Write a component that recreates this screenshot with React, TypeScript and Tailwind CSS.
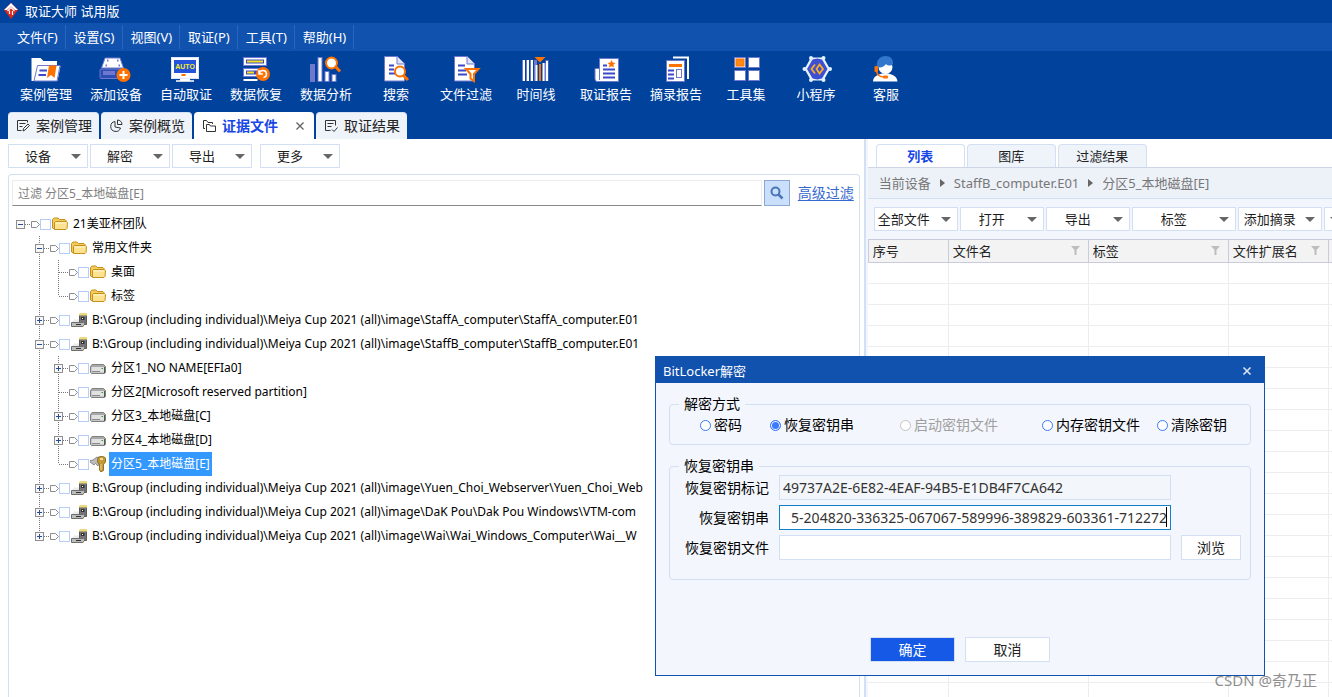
import type { ReactNode } from "react";

const P = "#6f78cf";
const O = "#ff7200";
const B = "#3b49c8";

function Tool({ label, children }: { label: string; children: ReactNode }) {
  return (
    <button type="button" className="flex w-[70px] shrink-0 flex-col items-center gap-[2px] text-white">
      <svg width="30" height="28" viewBox="0 0 30 28" className="overflow-visible" aria-hidden="true">
        {children}
      </svg>
      <span className="text-[13px] leading-4 whitespace-nowrap">{label}</span>
    </button>
  );
}

const page = (
  <>
    <path d="M3.500 .5h13l7 7v17.500h-20z" fill="#fff" stroke={P} />
    <path d="M16 1v7h7" fill="#dfe3fa" stroke={P} />
  </>
);

function Toolbar() {
  return (
    <nav aria-label="工具栏" className="flex h-[61px] overflow-hidden pt-[5px] pl-[11px]">
      <Tool label="案例管理">
        <path d="M.5 2h9l3 3H26v5h3.500l-3 15H.5z" fill="#fff" />
        <path d="M3 25 6.500 9.500H29L26 25z" fill="#fff" stroke={P} />
        <path d="M8.500 14.500H16M7.500 19H15" stroke={B} strokeWidth="2" />
        <path d="M18 9.500h7.500L23.500 22l-3.500-3-4 3z" fill={O} />
      </Tool>
      <Tool label="添加设备">
        <path d="M4 2h15l3.500 10H.5z" fill="#fff" stroke={P} />
        <path d="M6 4.500h1.500M16 4.500h1.500M4.500 9.500H6M17.500 9.500H19" stroke={P} strokeWidth="2" />
        <rect x="-1" y="13" width="24" height="9.500" rx="1" fill="#2c4fb4" stroke={P} />
        <rect x="2" y="15" width="12" height="4" fill={P} />
        <circle cx="22.500" cy="19" r="7" fill={O} />
        <path d="M18.500 19h8M22.500 15v8" stroke="#fff" strokeWidth="2" />
      </Tool>
      <Tool label="自动取证">
        <rect x=".5" y="1.500" width="27" height="21" fill="#fff" stroke="#dfe6fa" />
        <rect x="3" y="4" width="22" height="13" fill="#2453dc" />
        <text x="14" y="13" textAnchor="middle" fontSize="7" fontWeight="700" fill="#f6ee1c" fontFamily="Liberation Sans, sans-serif">AUTO</text>
        <rect x="10.500" y="18" width="4" height="2" fill={O} />
        <path d="M9 23.500h10M5 25h18" stroke="#fff" strokeWidth="1.500" />
      </Tool>
      <Tool label="数据恢复">
        <rect x="2.500" y="1.500" width="23" height="8" fill="#fff" stroke={P} />
        <path d="M5 5.500h18" stroke={B} strokeWidth="4" />
        <path d="M6 5.500h16" stroke="#f3e21d" strokeWidth="2" />
        <rect x="2.500" y="12.500" width="15" height="8" fill="#fff" stroke={P} />
        <path d="M5 16.500h11" stroke={B} strokeWidth="4" />
        <path d="M6 16.500h7" stroke="#f3e21d" strokeWidth="2" />
        <path d="M2.500 24h14" stroke="#fff" strokeWidth="2" />
        <circle cx="22" cy="18" r="7" fill={O} />
        <path d="M18.500 17.500a3.500 3.500 0 1 1 4 4M18 14v4h4" fill="none" stroke="#fff" strokeWidth="1.500" />
      </Tool>
      <Tool label="数据分析">
        <rect x="-.5" y="8.500" width="4" height="17" fill={P} stroke={P} />
        <rect x="7" y="1.500" width="4" height="24" fill="#fff" stroke={P} />
        <rect x="14" y="15.500" width="4" height="10" fill="#fff" stroke={P} />
        <rect x="21" y="18.500" width="4" height="7" fill="#fff" stroke={P} />
        <path d="m24.500 10.500 4.500 5" stroke={O} strokeWidth="3" />
        <circle cx="20.500" cy="7" r="5.500" fill="#fff" stroke={O} strokeWidth="2" />
      </Tool>
      <Tool label="搜索">
        {page}
        <path d="M8 9.500h5M8 13.500h5M8 17.500h6" stroke={B} strokeWidth="2" />
        <path d="m22 19 5 5" stroke={O} strokeWidth="3" />
        <circle cx="19" cy="15.500" r="5" fill="#fff" stroke={O} strokeWidth="2" />
      </Tool>
      <Tool label="文件过滤">
        {page}
        <path d="M7 9.500h7M7 14.500h8M7 18.500h9" stroke={B} strokeWidth="2" />
        <path d="M15 13h12.500l-4.500 5v7l-3.500-2.500V18z" fill="#fff" stroke={O} strokeWidth="2" />
      </Tool>
      <Tool label="时间线">
        <path d="M2.500 4v21M6.500 4v21M10.500 4v21M14.500 4v21M23.500 7v18M26 4v21" stroke={P} strokeWidth="3" />
        <path d="M3 4v21M7 4v21M11 4v21M15.500 9v16M22.500 7v18M26 5v20" stroke="#fff" strokeWidth="2" />
        <path d="M13.500 1h11l-5.500 5.500z" fill={O} />
        <path d="M19 8v17" stroke={O} strokeWidth="2" />
      </Tool>
      <Tool label="取证报告">
        <path d="M8.500 2.500h19v23h-21a2.500 2.500 0 0 1-2.500-2.500V12.500h4.500z" fill="#fff" stroke={P} />
        <path d="M8.500 12v12" stroke={P} />
        <path d="m20.500 4 1.200 2.600 2.800.3-2.100 1.900.6 2.800-2.500-1.400-2.500 1.400.6-2.800-2.100-1.900 2.800-.3z" fill={O} />
        <path d="M12 9.500h4M12 13.500h12M12 17.500h12M12 21.500h12" stroke={B} strokeWidth="2" />
      </Tool>
      <Tool label="摘录报告">
        <path d="M12 1.500h15V23" fill="none" stroke="#fff" strokeWidth="2" />
        <rect x="5.500" y="4.500" width="18" height="21" fill="#fff" stroke={P} />
        <path d="M8 9.500h13" stroke={O} strokeWidth="3" />
        <path d="M7 14.500h6M7 18.500h6M7 22.500h6" stroke={B} strokeWidth="2" />
        <rect x="15.500" y="13.500" width="5" height="8" fill="#fff" stroke={P} />
      </Tool>
      <Tool label="工具集">
        <path d="M3.500 1.500h11v10h-11zM17.500 1.500h11v10h-11zM3.500 14.500h11v10h-11zM17.500 14.500h11v10h-11z" fill="#fff" stroke={P} />
        <rect x="5" y="3" width="8" height="7" fill="#ff8a12" stroke={O} />
      </Tool>
      <Tool label="小程序">
        <path d="M10 1.500h12.500L29 13l-6.500 11.500H10L3.500 13z" fill="#e8f4ff" />
        <path d="m11.500 3.500 4.800-1 4.800 1L26.500 13 21 22.500l-4.700 1-4.800-1L6 13z" fill="#3d4fd2" />
        {[[10, 2], [22.5, 2], [29, 13], [22.5, 24], [10, 24], [3.5, 13]].map(([x, y]) => (
          <circle key={`${x}-${y}`} cx={x} cy={y} r="2" fill="#dff4ff" />
        ))}
        <path d="m14 8.500-3.500 4.500 3.500 4.500M18.500 8.500l3.500 4.500-3.500 4.500-3-4.500z" fill="none" stroke="#ffad1f" strokeWidth="1.800" />
      </Tool>
      <Tool label="客服">
        <path d="M2 25.500c0-5 5-7 9-8h6c5 1 9 3 9.500 8z" fill="#fff" />
        <circle cx="14.500" cy="11" r="7" fill="#fff" />
        <path d="M6 11C5 4 9 0 14.500 0c5 0 8 3.500 7.500 8-2 2-5 2-7 0-2 3-5 4-9 3z" fill="#3177cb" />
        <rect x="3.500" y="10" width="3.500" height="6" rx="1" fill={O} />
        <path d="M5.500 15c.5 4 4 6 8 6" fill="none" stroke={O} strokeWidth="1.500" />
        <rect x="12" y="19.500" width="5" height="3" rx="1" fill={O} />
      </Tool>
    </nav>
  );
}

const tabBase = "flex h-[27px] items-center gap-[6px] rounded-t border-t border-[#d5e1f4] bg-[#eff3fa] pr-[7px] pl-2 text-sm leading-5 whitespace-nowrap text-[#222]";

function MainTabs() {
  return (
    <div role="tablist" className="flex gap-[2px] pl-2">
      <button type="button" role="tab" className={tabBase}>
        <svg width="14" height="14" viewBox="0 0 14 14" fill="none" stroke="#333" aria-hidden="true">
          <path d="M11.500 3.500v-2h-10v10h4M3.500 4.500h6M3.500 7.500h3M7 12l.5-2.500 4.500-4.500 1.500 1.500L9 11z" />
        </svg>
        案例管理
      </button>
      <button type="button" role="tab" className={tabBase}>
        <svg width="14" height="14" viewBox="0 0 14 14" fill="none" stroke="#333" aria-hidden="true">
          <path d="M6 2.500a5 5 0 1 0 5.500 6.500L6 8zM8.500 1v4.500H13A4.500 4.500 0 0 0 8.500 1z" />
        </svg>
        案例概览
      </button>
      <div className="flex h-[27px] items-center rounded-t bg-white pr-[9px]">
        <button type="button" role="tab" aria-selected="true" className="flex items-center gap-[6px] pl-2 text-sm leading-5 font-bold whitespace-nowrap text-[#1747e6]">
          <svg width="14" height="14" viewBox="0 0 14 14" fill="none" stroke="#333" aria-hidden="true">
            <path d="M3 9.500H1.500v-8h3l1.500 2h4.500v1.500M4.500 12.500v-7h3l1 1.500h5v5.500z" />
          </svg>
          证据文件
        </button>
        <button type="button" aria-label="关闭" className="ml-[17px]">
          <svg width="10" height="10" viewBox="0 0 10 10" stroke="#666" strokeWidth="1.400" aria-hidden="true">
            <path d="m1.500 1.500 7 7M8.500 1.500l-7 7" />
          </svg>
        </button>
      </div>
      <button type="button" role="tab" className={tabBase}>
        <svg width="14" height="14" viewBox="0 0 14 14" fill="none" stroke="#333" aria-hidden="true">
          <path d="M11.500 6.500v-5h-10v10h5M3.500 4.500h6M3.500 7.500h4M8 10.500l2 2 3.500-4" />
        </svg>
        取证结果
      </button>
    </div>
  );
}

function Caret() {
  return (
    <svg width="10" height="5" viewBox="0 0 10 5" className="pointer-events-none shrink-0" aria-hidden="true">
      <path d="M0 0h10L5 5z" fill="#666" />
    </svg>
  );
}

function Drop({ label, className }: { label: string; className: string }) {
  return (
    <button type="button" aria-haspopup="menu" className={`flex shrink-0 items-center justify-between border border-[#d3dff2] bg-white pr-[6px] text-[13px] leading-4 whitespace-nowrap text-[#1d1d1d] ${className}`}>
      {label}
      <Caret />
    </button>
  );
}

type Kind = "folder" | "image" | "disk" | "key";
type Row = { level: number; kind: Kind; label: string; box?: "+" | "-"; last?: boolean; selected?: boolean };

const rows: Row[] = [
  { level: 0, kind: "folder", label: "21美亚杯团队", box: "-" },
  { level: 1, kind: "folder", label: "常用文件夹", box: "-" },
  { level: 2, kind: "folder", label: "桌面" },
  { level: 2, kind: "folder", label: "标签", last: true },
  { level: 1, kind: "image", label: "B:\\Group (including individual)\\Meiya Cup 2021 (all)\\image\\StaffA_computer\\StaffA_computer.E01", box: "+" },
  { level: 1, kind: "image", label: "B:\\Group (including individual)\\Meiya Cup 2021 (all)\\image\\StaffB_computer\\StaffB_computer.E01", box: "-" },
  { level: 2, kind: "disk", label: "分区1_NO NAME[EFIa0]", box: "+" },
  { level: 2, kind: "disk", label: "分区2[Microsoft reserved partition]" },
  { level: 2, kind: "disk", label: "分区3_本地磁盘[C]", box: "+" },
  { level: 2, kind: "disk", label: "分区4_本地磁盘[D]", box: "+" },
  { level: 2, kind: "key", label: "分区5_本地磁盘[E]", last: true, selected: true },
  { level: 1, kind: "image", label: "B:\\Group (including individual)\\Meiya Cup 2021 (all)\\image\\Yuen_Choi_Webserver\\Yuen_Choi_Web", box: "+" },
  { level: 1, kind: "image", label: "B:\\Group (including individual)\\Meiya Cup 2021 (all)\\image\\DaK Pou\\Dak Pou Windows\\VTM-com", box: "+" },
  { level: 1, kind: "image", label: "B:\\Group (including individual)\\Meiya Cup 2021 (all)\\image\\Wai\\Wai_Windows_Computer\\Wai__W", box: "+", last: true },
];

function Branch({ level, box, last }: Row) {
  return (
    <svg width="24" height="24" viewBox="0 0 24 24" fill="none" className="shrink-0" shapeRendering="crispEdges" aria-hidden="true">
      {level > 0 && <path d={last ? "M4.500 0v12" : "M4.500 0v24"} stroke="#777" strokeDasharray="1 1" />}
      <path d="M5 12.500h10" stroke="#777" strokeDasharray="1 1" />
      {box && (
        <>
          <rect x=".5" y="8.500" width="8" height="8" fill="#f7f7f7" stroke="#8e8e8e" />
          <path d={box === "+" ? "M2 12.500h5M4.500 10v5" : "M2 12.500h5"} stroke="#2b4b9b" />
        </>
      )}
      <path d="M15.500 9.500h5l3 3-3 3h-5z" fill="#fff" stroke="#8a8a8a" shapeRendering="auto" />
    </svg>
  );
}

function NodeIcon({ kind }: { kind: Kind }) {
  return (
    <svg width="16" height="16" viewBox="0 0 16 16" className="shrink-0" aria-hidden="true">
      {kind === "folder" && (
        <>
          <path d="M.5 12V3.500l1.500-1.500h4l1.500 1.500h5.500l1 1V12.500H1z" fill="#f3cb5c" stroke="#c4901c" />
          <path d="M2.500 13.500V6.500l1-1h11l1 1-.5 6-1 1z" fill="#fde391" stroke="#c4901c" />
          <path d="M4 7h10" stroke="#fff6cf" />
        </>
      )}
      {kind === "image" && (
        <>
          <path d="M8.500 3h7v9.500h-7z" fill="#757575" stroke="#5a5a5a" />
          <path d="M8.500 1h7.500v2.500H8z" fill="#e9dc7a" />
          <path d="M10 5h3.500v3H10z" fill="#333" />
          <path d="M11 6h1v1h-1z" fill="#fff" />
          <path d="m1 10.500 1.500-3H8v3z" fill="#ececec" />
          <path d="M.5 10.500H12l1.500-1v3l-1.500 2H.5z" fill="#bdbdbd" stroke="#6d6d6d" />
          <path d="M5 12.500h5" stroke="#333" />
        </>
      )}
      {kind === "disk" && (
        <>
          <path d="M.5 6.500 2 4.500h11.500l2 2v6l-1 1h-13l-1-1z" fill="#a9a9a9" stroke="#808080" />
          <path d="M1.500 7h12.500v5.500H1.500z" fill="#e2e2e2" />
          <path d="M14.500 7v6" stroke="#555" />
          <path d="M2.500 11.500h8" stroke="#333" strokeDasharray="1 1" />
          <path d="M11.500 8.500h1.500" stroke="#2b9a3a" />
        </>
      )}
      {kind === "key" && (
        <>
          <path d="M0 6V4.500L3 4l4-3 4 2-3 7-2.500-2.500L4 9z" fill="#bcbcbc" stroke="#777" strokeWidth=".8" />
          <path d="M8 1.500c1.500-1.500 6-1.500 7.500.5v4L13.500 8.500v6L11 16l-1.500-2V8.500L7.500 6z" fill="#c39a35" stroke="#7c5c13" strokeWidth=".8" />
          <path d="M10 3h3" stroke="#fff3b5" strokeWidth="1.500" />
          <path d="M11 8v6" stroke="#f0d67c" />
        </>
      )}
    </svg>
  );
}

function TreeRow(row: Row) {
  const id = `node-${rows.findIndex((r) => r.label === row.label)}`;
  return (
    <li className="flex h-6 items-center">
      {row.level > 0 && (
        <span className="w-[19px] shrink-0" />
      )}
      {row.level > 1 && (
        <svg width="19" height="24" viewBox="0 0 19 24" className="shrink-0" shapeRendering="crispEdges" aria-hidden="true">
          <path d="M4.500 0v24" stroke="#777" strokeDasharray="1 1" />
        </svg>
      )}
      <Branch {...row} />
      <input id={id} type="checkbox" className="size-[11px] shrink-0 appearance-none border border-[#b5cdfb] bg-white checked:bg-[#3b79ff]" />
      <span className="w-px shrink-0" />
      <NodeIcon kind={row.kind} />
      <label htmlFor={id} className={`ml-[3px] px-[2px] text-xs leading-6 whitespace-nowrap ${row.selected ? "bg-[#3399ff] text-white" : "text-black"}`}>
        {row.label}
      </label>
    </li>
  );
}

function EvidencePanel() {
  return (
    <section className="flex w-[65%] min-w-0 shrink-0 flex-col border-r-2 border-[#d3dff2] pt-[5px] pr-1 pl-2">
      <div className="flex gap-[2px]">
        <Drop label="设备" className="h-6 w-20 pl-4" />
        <Drop label="解密" className="h-6 w-20 pl-4" />
        <Drop label="导出" className="h-6 w-20 pl-4" />
        <Drop label="更多" className="ml-[6px] h-6 w-20 pl-4" />
      </div>
      <div className="mt-[6px] flex min-h-0 flex-1 flex-col rounded-t border border-b-0 border-[#d3dff2]">
        <div className="flex items-center pt-[5px] pr-[5px] pl-[3px]">
          <input
            type="text"
            aria-label="过滤"
            placeholder="过滤 分区5_本地磁盘[E]"
            className="h-[26px] min-w-0 flex-1 border border-[#ececec] border-b-[#888] px-[5px] text-xs text-black outline-none placeholder:text-[#808080]"
          />
          <button type="button" aria-label="搜索" className="ml-[2px] flex size-[26px] items-center justify-center border border-[#8da9d3] bg-[#cadffb]">
            <svg width="14" height="14" viewBox="0 0 14 14" fill="none" stroke="#4a76b8" strokeWidth="2" aria-hidden="true">
              <circle cx="5.500" cy="5.500" r="4" />
              <path d="m8.500 8.500 4 4" strokeWidth="2.500" />
            </svg>
          </button>
          <a href="#advanced" className="ml-2 text-sm whitespace-nowrap text-[#3469cf] underline underline-offset-2">高级过滤</a>
        </div>
        <ul className="mt-[6px] min-h-0 flex-1 overflow-hidden pl-[7px]">
          {rows.map((row) => (
            <TreeRow key={row.label} {...row} />
          ))}
        </ul>
      </div>
    </section>
  );
}

function Filter() {
  return (
    <svg width="9" height="10" viewBox="0 0 9 10" className="shrink-0" aria-hidden="true">
      <path d="M0 0h9L5.500 4v5h-2V4z" fill="#bdbdbd" />
    </svg>
  );
}

const columns = [
  { name: "序号", filter: false },
  { name: "文件名", filter: true },
  { name: "标签", filter: true },
  { name: "文件扩展名", filter: true },
];

const sideTab = "h-[23px] w-[89px] rounded-t border border-b-0 border-[#d3dff2] text-[13px] leading-4";

function FileList() {
  return (
    <section className="flex min-w-0 flex-1 flex-col overflow-hidden bg-[#f3f6fc] pl-[2px]">
      <div role="tablist" className="flex gap-[2px] border-b border-[#cdd5e6] bg-white pt-[5px] pl-2">
        <button type="button" role="tab" aria-selected="true" className={`${sideTab} bg-white font-bold text-[#1747e6]`}>列表</button>
        <button type="button" role="tab" className={`${sideTab} bg-[#eff3fa] text-[#222]`}>图库</button>
        <button type="button" role="tab" className={`${sideTab} bg-[#eff3fa] text-[#222]`}>过滤结果</button>
      </div>
      <div className="flex h-[31px] items-center gap-[9px] border-b border-[#d3dff2] bg-[#edf1f8] pl-[11px] text-[13px] leading-4 whitespace-nowrap text-[#777]">
        <span>当前设备</span>
        <svg width="5" height="8" viewBox="0 0 5 8" aria-hidden="true"><path d="m0 0 5 4-5 4z" fill="#666" /></svg>
        <span>StaffB_computer.E01</span>
        <svg width="5" height="8" viewBox="0 0 5 8" aria-hidden="true"><path d="m0 0 5 4-5 4z" fill="#666" /></svg>
        <span>分区5_本地磁盘[E]</span>
      </div>
      <div className="flex h-10 items-center gap-[2px] pl-[6px]">
        <div className="flex h-6 w-[84px] shrink-0 items-center border border-[#d3dff2] bg-white pr-[6px]">
          <select aria-label="文件范围" className="w-full appearance-none bg-transparent pl-[3px] text-[13px] leading-4 text-[#1d1d1d] outline-none">
            <option>全部文件</option>
          </select>
          <Caret />
        </div>
        <Drop label="打开" className="h-6 w-[84px] pl-[18px]" />
        <Drop label="导出" className="h-6 w-[84px] pl-[18px]" />
        <Drop label="标签" className="h-6 w-[104px] pl-7" />
        <Drop label="添加摘录" className="h-6 w-[84px] pl-[5px]" />
        <Drop label="" className="h-6 w-[84px] pl-[5px]" />
      </div>
      <div className="min-h-0 flex-1 overflow-hidden bg-white">
        <table className="w-[560px] table-fixed border-separate border-spacing-0">
          <colgroup>
            <col className="w-[81px]" />
            <col className="w-[140px]" />
            <col className="w-[140px]" />
            <col className="w-[100px]" />
            <col />
          </colgroup>
          <thead>
            <tr className="h-6 bg-[#f3f3f4]">
              {columns.map((c) => (
                <th key={c.name} className="border-y border-r border-[#c9cadb] p-0 font-normal first:border-l">
                  <div className="flex items-center justify-between pr-2 pl-1 text-[13px] leading-4 whitespace-nowrap text-[#222]">
                    {c.name}
                    {c.filter && <Filter />}
                  </div>
                </th>
              ))}
              <th className="border-y border-[#c9cadb] p-0" />
            </tr>
          </thead>
          <tbody>
            {Array.from({ length: 40 }, (_, i) => (
              <tr key={i} className="h-[21px]">
                <td className="border-r border-b border-[#ededed] p-0" />
                <td className="border-r border-b border-[#ededed] p-0" />
                <td className="border-r border-b border-[#ededed] p-0" />
                <td className="border-r border-b border-[#ededed] p-0" />
                <td className="border-b border-[#ededed] p-0" />
              </tr>
            ))}
          </tbody>
        </table>
      </div>
    </section>
  );
}

const modes = [
  { label: "密码" },
  { label: "恢复密钥串", checked: true },
  { label: "启动密钥文件", disabled: true },
  { label: "内存密钥文件" },
  { label: "清除密钥" },
];

const field = "block h-[25px] w-full border px-[3px] text-sm text-[#333] outline-none";

function DecryptDialog() {
  return (
    <div role="dialog" aria-labelledby="dialog-title" className="absolute top-[356px] left-[655px] w-[610px] border border-[#1152ae] bg-[#f3f6fc] pb-[13px] text-sm text-black">
      <div className="flex h-[26px] items-center justify-between bg-[#1152ae] pt-[2px] pr-3 pl-[7px] text-white">
        <h2 id="dialog-title" className="text-[13px] leading-4">BitLocker解密</h2>
        <button type="button" aria-label="关闭">
          <svg width="10" height="10" viewBox="0 0 10 10" stroke="#dbe4f2" strokeWidth="1.600" aria-hidden="true">
            <path d="m1.500 1.500 7 7M8.500 1.500l-7 7" />
          </svg>
        </button>
      </div>
      <form className="px-[13px] pt-3">
        <fieldset className="rounded border border-[#d3dff2] pt-px pb-2">
          <legend className="ml-[9px] px-[5px] leading-[18px]">解密方式</legend>
          <div className="grid grid-cols-[70px_130px_142px_115px_auto] pl-[30px]">
            {modes.map((m) => (
              <label key={m.label} className={`flex items-center gap-[3px] leading-[22px] whitespace-nowrap ${m.disabled ? "text-[#a0a0a0]" : ""}`}>
                <input
                  type="radio"
                  name="mode"
                  defaultChecked={m.checked}
                  disabled={m.disabled}
                  className="size-[11px] shrink-0 appearance-none rounded-full border border-[#3b79ff] bg-white checked:bg-[#3b79ff] checked:shadow-[inset_0_0_0_1px_#fff] disabled:border-[#c4c4c4]"
                />
                {m.label}
              </label>
            ))}
          </div>
        </fieldset>
        <fieldset className="mt-3 rounded border border-[#d3dff2] pb-[19px]">
          <legend className="ml-[9px] px-[5px] leading-[18px]">恢复密钥串</legend>
          <div className="grid grid-cols-[99px_392px_60px] items-center gap-x-[10px] gap-y-[5px]">
            <label htmlFor="key-id" className="text-right leading-5">恢复密钥标记</label>
            <input id="key-id" readOnly defaultValue="49737A2E-6E82-4EAF-94B5-E1DB4F7CA642" className={`${field} border-[#d3dff2] bg-[#f3f6fa]`} />
            <span />
            <label htmlFor="key" className="text-right leading-5">恢复密钥串</label>
            <div className="relative">
              <input id="key" defaultValue="5-204820-336325-067067-589996-389829-603361-712272" className={`${field} border-[#1180c8] bg-white text-right`} />
              <span className="absolute top-[2px] right-[4px] h-5 w-px bg-black" />
            </div>
            <span />
            <label htmlFor="key-file" className="text-right leading-5">恢复密钥文件</label>
            <input id="key-file" className={`${field} border-[#d3dff2] bg-white`} />
            <button type="button" className="h-[25px] border border-[#d3dff2] bg-white text-[#222]">浏览</button>
          </div>
        </fieldset>
        <div className="mt-[57px] flex justify-center gap-[10px]">
          <button type="button" className="h-[25px] w-[85px] border border-[#d3dff2] bg-[#1559e6] text-white">确定</button>
          <button type="button" className="h-[25px] w-[85px] border border-[#d3dff2] bg-white text-[#222]">取消</button>
        </div>
      </form>
    </div>
  );
}

export default function App() {
  return (
    <div className="relative flex h-screen flex-col overflow-hidden bg-white font-['Noto_Sans','Noto_Sans_CJK_SC',sans-serif]">
      <header className="bg-[#00429c] text-white">
        <div className="flex h-[23px] items-center gap-[7px] pb-[2px] pl-1">
          <svg width="14" height="16" viewBox="0 0 14 16" aria-hidden="true">
            <path d="M7 0 14 7 7 16 0 7z" fill="#d92720" />
            <path d="M7 0 14 7h-3L7 3.500 3 7H0z" fill="#fff" />
            <path d="M3.500 8 7 4.500 10.500 8M5.500 11V7.500M8.500 12V8" fill="none" stroke="#fff" strokeWidth="1.200" />
          </svg>
          <h1 className="text-[13px] leading-4">取证大师 试用版</h1>
        </div>
        <nav aria-label="菜单" className="flex h-7 items-center bg-[#1152ae] pl-[9px]">
          {["文件(F)", "设置(S)", "视图(V)", "取证(P)", "工具(T)", "帮助(H)"].map((m) => (
            <button key={m} type="button" className="h-6 border-r border-[#2a66bb] pr-[7px] pb-px pl-2 text-[13px] leading-4">{m}</button>
          ))}
        </nav>
        <Toolbar />
        <MainTabs />
      </header>
      <main className="flex min-h-0 flex-1">
        <EvidencePanel />
        <FileList />
      </main>
      <DecryptDialog />
      <div className="absolute right-[15px] bottom-[7px] text-[15px] leading-5 text-[#8f8f8f]">CSDN @奇乃正</div>
    </div>
  );
}
